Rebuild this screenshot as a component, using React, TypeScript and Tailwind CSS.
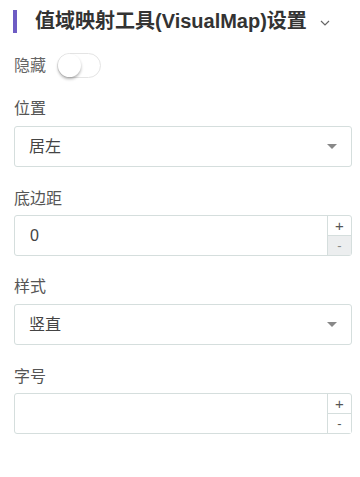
import React from "react";

const font = { fontFamily: '"Liberation Sans", "Noto Sans CJK SC", sans-serif' };

function Select({ value }: { value: string }) {
  return (
    <div className="flex h-[41px] items-center justify-between rounded-[3px] border border-[#d5dedd] bg-white pl-[14px] pr-[14px]">
      <span className="text-[16px] text-[#444]">{value}</span>
      <svg width="10" height="6" viewBox="0 0 10 6">
        <path d="M0 0 L10 0 L5 5 Z" fill="#888" />
      </svg>
    </div>
  );
}

function NumberInput({ value, pressedMinus }: { value: string; pressedMinus?: boolean }) {
  return (
    <div className="flex h-[41px] rounded-[3px] border border-[#d5dedd] bg-white">
      <div className="flex flex-1 items-center pl-[15px] text-[16px] text-[#444]">{value}</div>
      <div className="flex w-[24px] flex-col border-l border-[#d5dedd]">
        <div className="flex flex-1 items-center justify-center text-[15px] leading-none text-[#555]">+</div>
        <div
          className={
            "flex flex-1 items-center justify-center border-t border-[#d5dedd] text-[13px] leading-none " +
            (pressedMinus ? "bg-[#eceeef] text-[#888]" : "bg-white text-[#555]")
          }
        >
          -
        </div>
      </div>
    </div>
  );
}

export default function App() {
  return (
    <div className="h-[477px] w-[360px] bg-white pl-[14px] pr-[8px] pt-[10px]" style={font}>
      <div className="flex h-[23px] items-center">
        <div className="ml-[-1px] h-[23px] w-[4px] bg-[#6e5cc4]" />
        <span className="ml-[18px] text-[20px] font-bold leading-[23px] text-[#333]">值域映射工具(VisualMap)设置</span>
        <svg className="ml-[13px] mt-[2px]" width="10" height="6" viewBox="0 0 10 6">
          <path d="M1 1 L5 5 L9 1" stroke="#666" strokeWidth="1.2" fill="none" />
        </svg>
      </div>
      <div className="mt-[20px] flex items-center">
        <span className="text-[16px] text-[#666]">隐藏</span>
        <div className="ml-[11px] flex h-[25px] w-[44px] items-center rounded-full border border-[#e4e4e4] bg-white">
          <div className="h-[23px] w-[23px] rounded-full bg-white shadow-[0_2px_3px_rgba(0,0,0,0.3)]" />
        </div>
      </div>
      <div className="mt-[19px] text-[16px] leading-[24px] text-[#555]">位置</div>
      <div className="mt-[5px]">
        <Select value="居左" />
      </div>
      <div className="mt-[20px] text-[16px] leading-[24px] text-[#555]">底边距</div>
      <div className="mt-[4px]">
        <NumberInput value="0" pressedMinus />
      </div>
      <div className="mt-[19px] text-[16px] leading-[24px] text-[#555]">样式</div>
      <div className="mt-[5px]">
        <Select value="竖直" />
      </div>
      <div className="mt-[20px] text-[16px] leading-[24px] text-[#555]">字号</div>
      <div className="mt-[4px]">
        <NumberInput value="" />
      </div>
    </div>
  );
}
